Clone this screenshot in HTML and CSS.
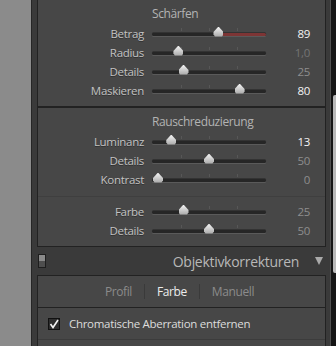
FILE: index.html
```html
<!DOCTYPE html>
<html lang="de">
<head>
    <meta charset="UTF-8">
    <title>Details</title>
    <link rel="stylesheet" href="styles.css">
</head>
<body>
    <div class="app">
        <div class="gutter"></div>
        <div class="column">
            <section class="group">
                <div class="group-title">Schärfen</div>
                <div class="row">
                    <span class="label">Betrag</span>
                    <div class="track"><div class="fill" style="left: 59.3%"></div><div class="range"><div class="thumb" style="left: 59.3%"></div></div></div>
                    <span class="value on">89</span>
                </div>
                <div class="row">
                    <span class="label">Radius</span>
                    <div class="track"><div class="range"><div class="thumb" style="left: 20%"></div></div></div>
                    <span class="value dim">1,0</span>
                </div>
                <div class="row">
                    <span class="label">Details</span>
                    <div class="track"><div class="range"><div class="thumb" style="left: 25%"></div></div></div>
                    <span class="value">25</span>
                </div>
                <div class="row">
                    <span class="label">Maskieren</span>
                    <div class="track"><div class="range"><div class="thumb" style="left: 80%"></div></div></div>
                    <span class="value on">80</span>
                </div>
            </section>

            <section class="group">
                <div class="group-title">Rauschreduzierung</div>
                <div class="row">
                    <span class="label">Luminanz</span>
                    <div class="track"><div class="range"><div class="thumb" style="left: 13%"></div></div></div>
                    <span class="value on">13</span>
                </div>
                <div class="row">
                    <span class="label">Details</span>
                    <div class="track"><div class="range"><div class="thumb" style="left: 50%"></div></div></div>
                    <span class="value">50</span>
                </div>
                <div class="row">
                    <span class="label">Kontrast</span>
                    <div class="track"><div class="range"><div class="thumb" style="left: 0%"></div></div></div>
                    <span class="value">0</span>
                </div>
                <hr class="divider">
                <div class="row">
                    <span class="label">Farbe</span>
                    <div class="track"><div class="range"><div class="thumb" style="left: 25%"></div></div></div>
                    <span class="value">25</span>
                </div>
                <div class="row">
                    <span class="label">Details</span>
                    <div class="track"><div class="range"><div class="thumb" style="left: 50%"></div></div></div>
                    <span class="value">50</span>
                </div>
            </section>

            <div class="panel-header">
                <span class="switch"></span>
                <span class="panel-name">Objektivkorrekturen</span>
                <span class="arrow"></span>
            </div>

            <section class="box">
                <div class="tabs">
                    <span class="tab">Profil</span>
                    <span class="tab-sep"></span>
                    <span class="tab active">Farbe</span>
                    <span class="tab-sep"></span>
                    <span class="tab">Manuell</span>
                </div>
                <label class="check-row">
                    <span class="checkbox">
                        <svg width="10" height="10" viewBox="0 0 10 10"><path d="M1.5 5 L4 8.5 L9 1" fill="none" stroke="#f2f2f2" stroke-width="1.6"/></svg>
                    </span>
                    Chromatische Aberration entfernen
                </label>
                <div class="rest"></div>
            </section>
        </div>
        <div class="scroll"><div class="scroll-thumb"></div></div>
    </div>
</body>
</html>
```

FILE: styles.css
```css
body {
    margin: 0;
    background-color: #8b8b8b;
    font-family: "Open Sans", "DejaVu Sans", sans-serif;
    font-size: 11.5px;
    letter-spacing: -0.3px;
    overflow: hidden;
}
.app {
    display: flex;
    height: 346px;
}
.gutter {
    width: 31px;
}
.column {
    box-sizing: border-box;
    width: 300px;
    background-color: #3a3a3a;
    border-left: 1px solid #262626;
    border-right: 1px solid #505050;
    padding: 0 4px 0 5px;
}
.scroll {
    flex: 1;
    background-color: #151515;
    position: relative;
}
.scroll-thumb {
    position: absolute;
    left: 2px;
    right: 0;
    top: 95px;
    height: 178px;
    border-radius: 2px 0 0 2px;
    background-color: #b9b9b9;
}
.group {
    background-color: #474747;
    border: 1px solid #222;
    border-top: none;
    padding-bottom: 6px;
}
.group + .group {
    border-top: 1px solid #222;
}
.group-title {
    padding: 4px 0 0 114px;
    line-height: 20px;
    color: #b3b3b3;
    font-size: 12px;
    letter-spacing: -0.4px;
}
.row {
    display: grid;
    grid-template-columns: 106px 114px 36px;
    column-gap: 8px;
    align-items: center;
    height: 19px;
}
.label {
    text-align: right;
    color: #c2c2c2;
    text-shadow: 0 1px 0 rgba(0, 0, 0, 0.35);
}
.value {
    text-align: right;
    color: #8e8e8e;
}
.value.on {
    color: #f4f4f4;
}
.value.dim {
    color: #747474;
}
.track {
    position: relative;
    height: 3px;
    margin-top: 1px;
    background-color: #262626;
    border-radius: 2px;
    box-shadow: 0 1px 0 #5a5a5a, 0 -1px 0 #333;
}
.track::before {
    content: "";
    position: absolute;
    left: 6px;
    right: 4px;
    top: -5px;
    height: 3px;
    background: linear-gradient(to right, transparent 0, transparent 23px, #575757 23px, #575757 24px, transparent 24px, transparent 51px, #575757 51px, #575757 52px, transparent 52px, transparent 79px, #575757 79px, #575757 80px, transparent 80px);
}
.range {
    position: absolute;
    top: 0;
    bottom: 0;
    left: 6px;
    right: 6px;
}
.fill {
    position: absolute;
    top: 0;
    bottom: 0;
    right: 0;
    background-color: #7d3535;
    border-radius: 2px;
}
.thumb {
    position: absolute;
    top: -6px;
    width: 10px;
    height: 10px;
    margin-left: -5px;
    background: linear-gradient(#f4f4f4, #a8a8a8);
    clip-path: polygon(50% 0, 100% 55%, 100% 80%, 85% 100%, 15% 100%, 0 80%, 0 55%);
}
.divider {
    border: none;
    border-top: 1px solid #3f3f3f;
    margin: 7px 0 5px;
}
.panel-header {
    display: flex;
    align-items: center;
    height: 28px;
    margin-left: -5px;
}
.switch {
    width: 8px;
    height: 14px;
    margin-left: 6px;
    border: 1px solid #1e1e1e;
    box-sizing: border-box;
    background: linear-gradient(#8a8a8a 50%, #4e4e4e 50%);
}
.panel-name {
    flex: 1;
    text-align: right;
    padding-right: 16px;
    font-size: 14px;
    color: #b8b8b8;
}
.arrow {
    width: 0;
    height: 0;
    border-left: 4px solid transparent;
    border-right: 4px solid transparent;
    border-top: 8px solid #a9a9a9;
    margin-right: 3px;
}
.box {
    background-color: #474747;
    border: 1px solid #222;
    border-bottom: none;
}
.tabs {
    display: flex;
    align-items: center;
    justify-content: center;
    height: 31px;
    gap: 12px;
    border-bottom: 1px solid #222;
    padding-right: 4px;
}
.tab {
    color: #8b8b8b;
    font-size: 12px;
    letter-spacing: -0.4px;
}
.tab.active {
    color: #ececec;
}
.tab-sep {
    width: 1px;
    height: 15px;
    background-color: #3a3a3a;
}
.check-row {
    display: flex;
    align-items: center;
    gap: 9px;
    height: 31px;
    padding-left: 10px;
    color: #dcdcdc;
    font-size: 11.5px;
    border-bottom: 1px solid #3c3c3c;
}
.checkbox {
    display: flex;
    align-items: center;
    justify-content: center;
    width: 10px;
    height: 10px;
    border: 1px solid #111;
    background-color: #2e2e2e;
}
.rest {
    height: 20px;
}
```
